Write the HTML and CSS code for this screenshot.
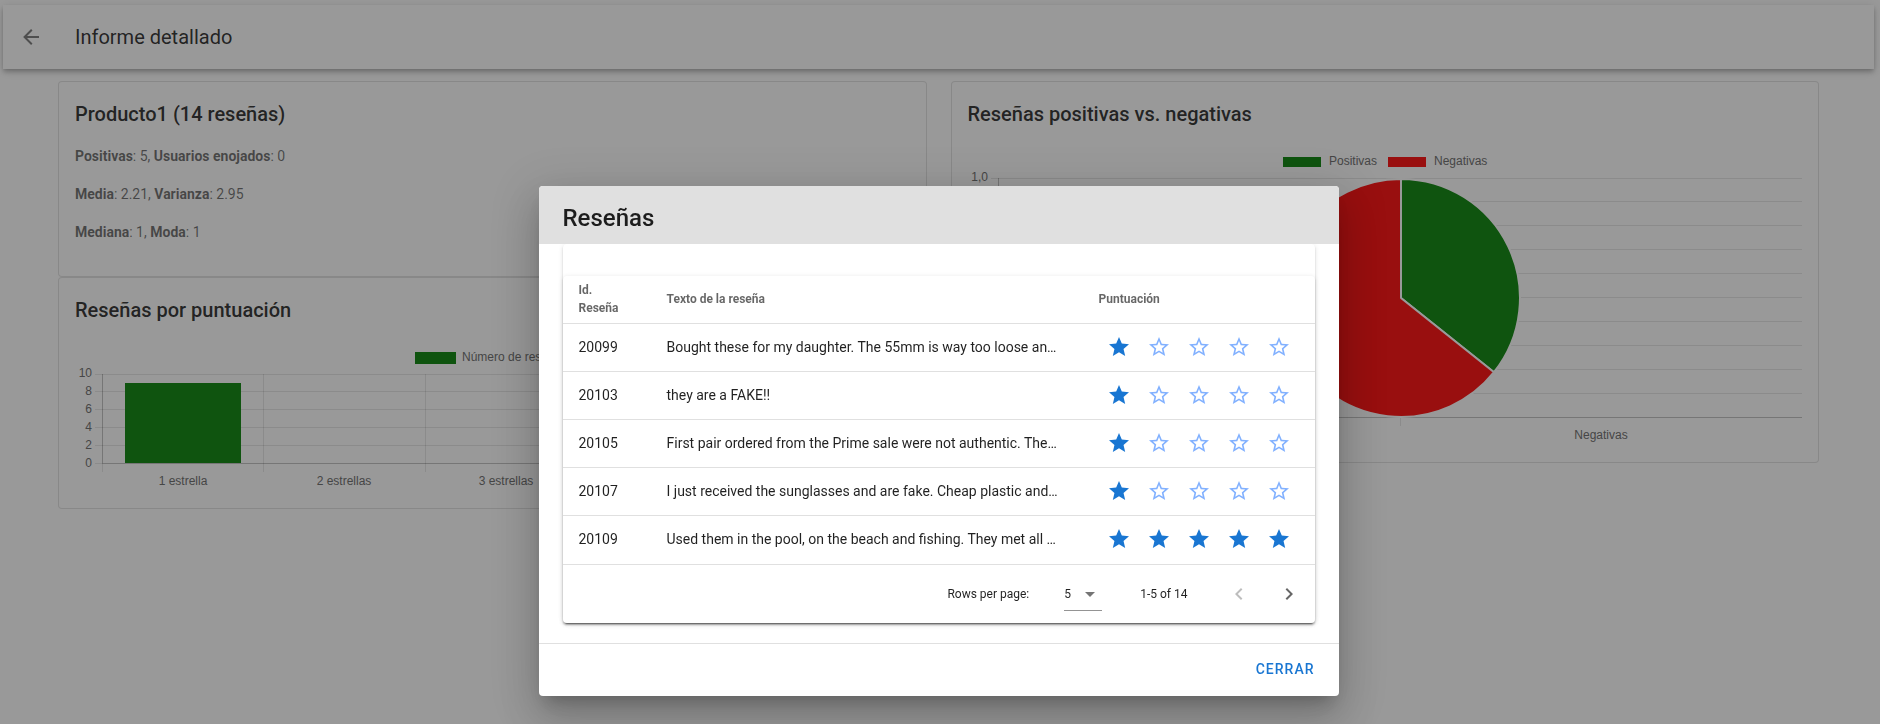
FILE: index.html
```html
<!DOCTYPE html>
<html lang="es">
<head>
<meta charset="utf-8">
<meta name="viewport" content="width=device-width, initial-scale=1">
<title>Informe detallado</title>
<link rel="stylesheet" href="styles.css">
</head>
<body>
<svg class="sprite" aria-hidden="true">
  <symbol id="star" viewBox="0 0 24 24"><path d="M12,17.27L18.18,21L16.54,13.97L22,9.24L14.81,8.62L12,2L9.19,8.62L2,9.24L7.45,13.97L5.82,21L12,17.27Z"/></symbol>
  <symbol id="star-outline" viewBox="0 0 24 24"><path d="M12,15.39L8.24,17.66L9.23,13.38L5.91,10.5L10.29,10.13L12,6.09L13.71,10.13L18.09,10.5L14.77,13.38L15.76,17.66M22,9.24L14.81,8.63L12,2L9.19,8.63L2,9.24L7.45,13.97L5.82,21L12,17.27L18.18,21L16.54,13.97L22,9.24Z"/></symbol>
</svg>

<div class="page">
  <header class="app-bar">
    <button class="icon-btn" type="button" aria-label="Volver">
      <svg class="icon" viewBox="0 0 24 24"><path d="M20,11V13H8L13.5,18.5L12.08,19.92L4.16,12L12.08,4.08L13.5,5.5L8,11H20Z"/></svg>
    </button>
    <h1 class="app-title">Informe detallado</h1>
  </header>

  <main class="container">
    <div class="column">
      <section class="card">
        <h2 class="card-title">Producto1 (14 reseñas)</h2>
        <div class="card-text">
          <p><strong>Positivas</strong>: 5, <strong>Usuarios enojados</strong>: 0</p>
          <p><strong>Media</strong>: 2.21, <strong>Varianza</strong>: 2.95</p>
          <p><strong>Mediana</strong>: 1, <strong>Moda</strong>: 1</p>
        </div>
      </section>
      <section class="card">
        <h2 class="card-title">Reseñas por puntuación</h2>
        <div class="card-chart">
          <svg class="chart chart-bars" viewBox="0 0 834 150" preserveAspectRatio="xMinYMin meet" role="img" aria-label="Número de reseñas por estrellas">
            <rect class="green" x="340" y="10" width="41" height="12"/>
            <text x="387" y="19">Número de reseñas</text>
            <path class="grid" d="M20 32.5H834M20 49.5H834M20 67.5H834M20 85.5H834M20 103.5H834M20 121.5H27M188.5 32V130M350.5 32V130M511.5 32V130M673.5 32V130M833.5 32V130M27.500 121V130"/>
            <path class="axis" d="M27.500 32V121M27 121.500H834"/>
            <rect class="green" x="50" y="41" width="116" height="80"/>
            <g class="end">
              <text x="17" y="35">10</text>
              <text x="17" y="53">8</text>
              <text x="17" y="71">6</text>
              <text x="17" y="89">4</text>
              <text x="17" y="107">2</text>
              <text x="17" y="125">0</text>
            </g>
            <g class="middle">
              <text x="108" y="143">1 estrella</text>
              <text x="269" y="143">2 estrellas</text>
              <text x="431" y="143">3 estrellas</text>
              <text x="592" y="143">4 estrellas</text>
              <text x="753" y="143">5 estrellas</text>
            </g>
          </svg>
        </div>
      </section>
    </div>

    <div class="column">
      <section class="card">
        <h2 class="card-title">Reseñas positivas vs. negativas</h2>
        <div class="card-chart">
          <svg class="chart chart-pie" viewBox="0 0 834 300" preserveAspectRatio="xMinYMin meet" role="img" aria-label="Reseñas positivas y negativas">
            <rect class="green" x="315" y="11" width="38" height="10"/>
            <text x="361" y="19">Positivas</text>
            <rect class="red" x="420" y="11" width="38" height="10"/>
            <text x="466" y="19">Negativas</text>
            <path class="grid" d="M23 32.5H834M30 55.5H834M30 79.5H834M30 103.5H834M30 127.5H834M30 151.5H834M30 175.5H834M30 199.5H834M30 223.5H834M30 247.5H834M30.5 271V280M432.5 271V280"/>
            <path class="axis" d="M30.500 32V271M30 271.500H834"/>
            <path class="green slice" d="M433 152V33A119 119 0 0 1 526 226.200Z"/>
            <path class="red slice" d="M433 152L526 226.200A119 119 0 1 1 433 33Z"/>
            <text class="end" x="20" y="35">1,0</text>
            <g class="middle">
              <text x="232" y="293">Positivas</text>
              <text x="633" y="293">Negativas</text>
            </g>
          </svg>
        </div>
      </section>
    </div>
  </main>
</div>

<div class="overlay">
  <div class="dialog" role="dialog" aria-modal="true" aria-labelledby="dialog-title">
    <h2 class="dialog-title" id="dialog-title">Reseñas</h2>
    <div class="dialog-body">
      <div class="table-card">
        <div class="data-table">
          <table>
            <colgroup><col class="col-id"><col><col class="col-score"></colgroup>
            <thead>
              <tr><th scope="col">Id. Reseña</th><th scope="col">Texto de la reseña</th><th scope="col">Puntuación</th></tr>
            </thead>
            <tbody>
              <tr><td>20099</td><td>Bought these for my daughter. The 55mm is way too loose an…</td><td><div class="rating" role="img" aria-label="1 de 5"><svg><use href="#star"/></svg><svg class="empty"><use href="#star-outline"/></svg><svg class="empty"><use href="#star-outline"/></svg><svg class="empty"><use href="#star-outline"/></svg><svg class="empty"><use href="#star-outline"/></svg></div></td></tr>
              <tr><td>20103</td><td>they are a FAKE!!</td><td><div class="rating" role="img" aria-label="1 de 5"><svg><use href="#star"/></svg><svg class="empty"><use href="#star-outline"/></svg><svg class="empty"><use href="#star-outline"/></svg><svg class="empty"><use href="#star-outline"/></svg><svg class="empty"><use href="#star-outline"/></svg></div></td></tr>
              <tr><td>20105</td><td>First pair ordered from the Prime sale were not authentic. The…</td><td><div class="rating" role="img" aria-label="1 de 5"><svg><use href="#star"/></svg><svg class="empty"><use href="#star-outline"/></svg><svg class="empty"><use href="#star-outline"/></svg><svg class="empty"><use href="#star-outline"/></svg><svg class="empty"><use href="#star-outline"/></svg></div></td></tr>
              <tr><td>20107</td><td>I just received the sunglasses and are fake. Cheap plastic and…</td><td><div class="rating" role="img" aria-label="1 de 5"><svg><use href="#star"/></svg><svg class="empty"><use href="#star-outline"/></svg><svg class="empty"><use href="#star-outline"/></svg><svg class="empty"><use href="#star-outline"/></svg><svg class="empty"><use href="#star-outline"/></svg></div></td></tr>
              <tr><td>20109</td><td>Used them in the pool, on the beach and fishing. They met all …</td><td><div class="rating" role="img" aria-label="5 de 5"><svg><use href="#star"/></svg><svg><use href="#star"/></svg><svg><use href="#star"/></svg><svg><use href="#star"/></svg><svg><use href="#star"/></svg></div></td></tr>
            </tbody>
          </table>
          <div class="table-footer">
            <label for="rows">Rows per page:</label>
            <span class="select">
              <select id="rows"><option>5</option><option>10</option><option>15</option></select>
              <svg class="caret" viewBox="0 0 24 24"><path d="M7,10L12,15L17,10H7Z"/></svg>
            </span>
            <span class="range">1-5 of 14</span>
            <button class="page-btn" type="button" aria-label="Página anterior" disabled><svg class="icon" viewBox="0 0 24 24"><path d="M15.410,16.580L10.830,12L15.410,7.410L14,6L8,12L14,18L15.410,16.580Z"/></svg></button>
            <button class="page-btn" type="button" aria-label="Página siguiente"><svg class="icon" viewBox="0 0 24 24"><path d="M8.590,16.580L13.170,12L8.590,7.410L10,6L16,12L10,18L8.590,16.580Z"/></svg></button>
          </div>
        </div>
      </div>
    </div>
    <div class="dialog-actions"><button class="text-btn" type="button">Cerrar</button></div>
  </div>
</div>
</body>
</html>
```
FILE: styles.css
```css
* { box-sizing: border-box; }

body {
  margin: 0;
  background: #fff;
  color: rgba(0, 0, 0, .87);
  font-family: Roboto, "Liberation Sans", sans-serif;
  font-size: 16px;
  line-height: 24px;
}

h1, h2, p { margin: 0; }
button { border: 0; background: none; padding: 0; font: inherit; color: inherit; }
.sprite { position: absolute; width: 0; height: 0; }
.icon { display: block; width: 24px; height: 24px; fill: currentColor; }

.page { padding: 5px 6px 0 3px; }

.app-bar {
  display: flex;
  align-items: center;
  height: 64px;
  padding: 0 4px;
  background: #fff;
  box-shadow: 0 2px 4px -1px rgba(0, 0, 0, .2), 0 4px 5px 0 rgba(0, 0, 0, .14), 0 1px 10px 0 rgba(0, 0, 0, .12);
}
.icon-btn {
  display: grid;
  place-items: center;
  width: 48px;
  height: 48px;
  color: rgba(0, 0, 0, .54);
}
.app-title { padding-left: 20px; font-size: 20px; font-weight: 400; line-height: 30px; }

.container {
  display: grid;
  grid-template-columns: 1fr 1fr;
  gap: 24px;
  align-items: start;
  max-width: 1785px;
  margin: 0 auto;
  padding: 12px;
}
.card { border: 1px solid rgba(0, 0, 0, .12); border-radius: 4px; background: #fff; }
.card-title { padding: 16px; font-size: 20px; font-weight: 500; line-height: 32px; }
.card-text { padding: 0 16px 16px; font-size: 14px; line-height: 20px; color: rgba(0, 0, 0, .6); }
.card-text p { margin-bottom: 18px; }
.card-text strong { font-weight: 700; }
.card-chart { padding: 0 16px 16px; }

.chart {
  display: block;
  width: 100%;
  font-family: "Liberation Sans", Arial, sans-serif;
  font-size: 12px;
  fill: #666;
}
.chart-bars { height: 150px; }
.chart-pie { height: 300px; }
.grid { fill: none; stroke: rgba(0, 0, 0, .1); }
.axis { fill: none; stroke: rgba(0, 0, 0, .25); }
.green { fill: green; }
.red { fill: red; }
.slice { stroke: #fff; stroke-width: 2px; stroke-linejoin: bevel; }
.end { text-anchor: end; }
.middle { text-anchor: middle; }

.overlay {
  position: fixed;
  inset: 0;
  display: flex;
  justify-content: center;
  align-items: flex-start;
  padding: 186px 27px 24px 24px;
  background: rgba(33, 33, 33, .46);
}
.dialog {
  flex: 0 1 800px;
  border-radius: 4px;
  overflow: hidden;
  background: #fff;
  box-shadow: 0 11px 15px -7px rgba(0, 0, 0, .2), 0 24px 38px 3px rgba(0, 0, 0, .14), 0 9px 46px 8px rgba(0, 0, 0, .12);
}
.dialog-title {
  padding: 16px 24px 10px;
  background: #e0e0e0;
  font-size: 24px;
  font-weight: 500;
  line-height: 32px;
}
.dialog-body { padding: 0 24px 20px; overflow: hidden; }
.table-card, .data-table {
  border-radius: 4px;
  background: #fff;
  box-shadow: 0 3px 1px -2px rgba(0, 0, 0, .2), 0 2px 2px 0 rgba(0, 0, 0, .14), 0 1px 5px 0 rgba(0, 0, 0, .12);
}
.table-card { padding-top: 32px; }

table { width: 100%; table-layout: fixed; border-spacing: 0; }
.col-id { width: 88px; }
.col-score { width: 232px; }
th, td { height: 48px; padding: 0 16px 2px; text-align: left; border-bottom: 1px solid rgba(0, 0, 0, .12); }
th { font-size: 12px; font-weight: 700; line-height: 18px; color: rgba(0, 0, 0, .6); }
td { font-size: 14px; line-height: 20px; white-space: nowrap; overflow: hidden; text-overflow: ellipsis; }
tbody tr:last-child td { border-bottom: 0; }

.rating { display: flex; }
.rating svg { flex: none; width: 40px; height: 24px; padding: 0 8px; fill: #1976d2; }
.rating .empty { fill: #82b1ff; }

.table-footer {
  display: flex;
  align-items: center;
  justify-content: flex-end;
  height: 59px;
  padding: 0 8px;
  border-top: 1px solid rgba(0, 0, 0, .12);
  font-size: 12px;
  line-height: 18px;
}
.select {
  display: grid;
  align-items: center;
  width: 38px;
  height: 34px;
  margin-left: 35px;
  border-bottom: 1px solid rgba(0, 0, 0, .42);
}
.select select {
  grid-area: 1 / 1;
  width: 100%;
  appearance: none;
  border: 0;
  padding: 0;
  background: none;
  font: inherit;
  color: inherit;
}
.caret { grid-area: 1 / 1; justify-self: end; width: 24px; height: 24px; fill: rgba(0, 0, 0, .54); pointer-events: none; }
.range { margin: 0 33px 0 38px; }
.page-btn { display: grid; place-items: center; width: 36px; height: 36px; color: rgba(0, 0, 0, .6); }
.page-btn + .page-btn { margin-left: 14px; }
.page-btn:disabled { color: rgba(0, 0, 0, .26); }

.dialog-actions {
  display: flex;
  justify-content: flex-end;
  align-items: center;
  height: 53px;
  padding: 8px;
  border-top: 1px solid rgba(0, 0, 0, .12);
}
.text-btn {
  height: 36px;
  padding: 0 16px 2px;
  font-size: 14px;
  font-weight: 500;
  letter-spacing: 1px;
  text-transform: uppercase;
  color: #1976d2;
}
```
